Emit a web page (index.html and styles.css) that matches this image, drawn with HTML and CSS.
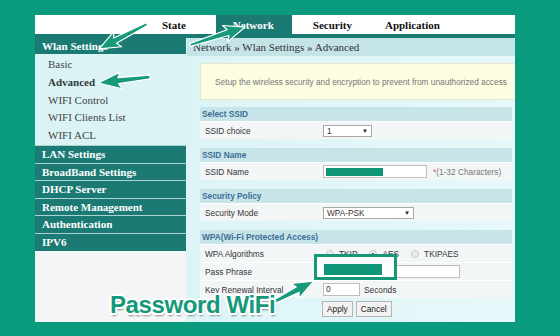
FILE: index.html
```html
<!DOCTYPE html>
<html>
<head>
<meta charset="utf-8">
<link rel="stylesheet" href="styles.css">
</head>
<body>
<div class="panel">
  <div class="topnav">
    <span class="nav-item state">State</span>
    <span class="nav-item tab">Network</span>
    <span class="nav-item sec">Security</span>
    <span class="nav-item app">Application</span>
  </div>
  <div class="layout">
    <aside class="side">
      <div class="side-head first">Wlan Settings</div>
      <ul class="sub">
        <li>Basic</li>
        <li class="cur">Advanced</li>
        <li>WIFI Control</li>
        <li>WIFI Clients List</li>
        <li>WIFI ACL</li>
      </ul>
      <div class="side-head">LAN Settings</div>
      <div class="side-head">BroadBand Settings</div>
      <div class="side-head">DHCP Server</div>
      <div class="side-head">Remote Management</div>
      <div class="side-head">Authentication</div>
      <div class="side-head">IPV6</div>
      <div class="side-fill"></div>
    </aside>
    <main class="main">
      <div class="crumb">Network » Wlan Settings » Advanced</div>
      <div class="content">
        <div class="info">Setup the wireless security and encryption to prevent from unauthorized access</div>

        <section class="sect">
          <div class="sect-head">Select SSID</div>
          <div class="row"><span class="lbl">SSID choice</span><span class="val"><span class="select s1"><span>1</span><span class="caret">▼</span></span></span></div>
        </section>

        <section class="sect">
          <div class="sect-head">SSID Name</div>
          <div class="row"><span class="lbl">SSID Name</span><span class="val"><span class="input ssid"><span class="blot b1"></span></span><span class="hint"><span class="req">*</span>(1-32 Characters)</span></span></div>
        </section>

        <section class="sect">
          <div class="sect-head">Security Policy</div>
          <div class="row"><span class="lbl">Security Mode</span><span class="val"><span class="select s2"><span>WPA-PSK</span><span class="caret">▼</span></span></span></div>
        </section>

        <section class="sect">
          <div class="sect-head">WPA(Wi-Fi Protected Access)</div>
          <div class="row"><span class="lbl">WPA Algorithms</span><span class="val radios"><span class="radio"></span><span class="rt">TKIP</span><span class="radio on"></span><span class="rt">AES</span><span class="radio"></span><span class="rt">TKIPAES</span></span></div>
          <div class="row"><span class="lbl">Pass Phrase</span><span class="val"><span class="input pass"></span></span></div>
          <div class="row"><span class="lbl">Key Renewal Interval</span><span class="val"><span class="input key">0</span><span class="unit">Seconds</span></span></div>
        </section>

        <div class="buttons"><span class="btn">Apply</span><span class="btn">Cancel</span></div>
      </div>
    </main>
  </div>
</div>

<div class="highlight"><span class="blot b2"></span></div>

<svg class="arrows" width="560" height="336" viewBox="0 0 560 336">
  <g fill="#169a79" stroke="#ffffff" stroke-width="1.2" stroke-linejoin="round">
    <polygon transform="translate(147,24) rotate(152.5)" points="0,-1.5 36,-3 33,-8.5 54,0 33,8.5 36,3 0,1.5"/>
    <polygon transform="translate(190,45) rotate(-18)" points="0,-1.5 40,-3 37,-8.5 58,0 37,8.5 40,3 0,1.5"/>
    <polygon transform="translate(150,77) rotate(173.4)" points="0,-1.8 32,-3 29,-8.5 52,0 29,8.5 32,3 0,1.8"/>
    <polygon transform="translate(272,303) rotate(-27.6)" points="0,-1.8 29,-3 26,-8.5 47,0 26,8.5 29,3 0,1.8"/>
  </g>
</svg>

<div class="callout">Password WiFi</div>
</body>
</html>
```

FILE: styles.css
```css
* { box-sizing: border-box; }
html, body { margin: 0; padding: 0; }
body {
  width: 560px;
  height: 336px;
  background: #0a9a7e;
  position: relative;
  overflow: hidden;
  font-family: "Liberation Serif", serif;
}
.panel {
  margin: 15px 0 0 35px;
  width: 480px;
  height: 307px;
  background: #ffffff;
  overflow: hidden;
  display: flex;
  flex-direction: column;
}
.topnav {
  height: 23px;
  flex: none;
  display: flex;
  align-items: stretch;
  padding-left: 127px;
  border-bottom: 4px solid #1b7b74;
  background: #fff;
}
.nav-item {
  font-size: 11px;
  font-weight: bold;
  color: #111;
  line-height: 19px;
  padding-top: 1px;
}
.nav-item.tab {
  margin-left: 30px;
  width: 76px;
  padding-left: 17px;
  background: #1b7b74;
  color: #fff;
}
.nav-item.sec { margin-left: 21px; }
.nav-item.app { margin-left: 33px; }

.layout {
  flex: 1;
  display: flex;
  min-height: 0;
}
.side {
  width: 151px;
  flex: none;
  display: flex;
  flex-direction: column;
}
.side-head {
  height: 17.6px;
  line-height: 16.6px;
  background: #1b7b74;
  color: #fff;
  font-size: 11px;
  font-weight: bold;
  padding-left: 7px;
  border-top: 1px solid #a9d4d0;
  flex: none;
}
.side-head.first {
  height: 16px;
  line-height: 16px;
  border-top: 0;
}
.sub {
  list-style: none;
  margin: 0;
  padding: 2px 0 0 0;
  background: #dcf3f5;
}
.sub li {
  height: 17.8px;
  line-height: 17.8px;
  padding-left: 13px;
  font-size: 11px;
  color: #3c4448;
}
.sub li.cur { font-weight: bold; color: #2f3a3e; }
.side-fill {
  flex: 1;
  background: #f3f5f6;
}

.main {
  flex: 1;
  min-width: 0;
  background: linear-gradient(90deg, #ddf4f7, #e6f8fa);
  overflow: hidden;
}
.crumb {
  height: 18px;
  line-height: 18px;
  background: #c4e4e8;
  font-size: 11px;
  color: #333;
  padding-left: 6px;
  margin-left: 1px;
  white-space: nowrap;
}
.content {
  padding: 7px 3px 0 14px;
  font-family: "Liberation Sans", Arial, sans-serif;
  font-size: 8.3px;
  color: #333;
}
.info {
  height: 37px;
  line-height: 36px;
  margin-right: -30px;
  background: #fdfde2;
  border: 1px solid #e5e8c9;
  padding-left: 14px;
  color: #777;
  white-space: nowrap;
  margin-bottom: 7px;
}
.sect { margin-bottom: 9px; }
.sect-head {
  height: 14px;
  line-height: 14px;
  background: #c7e5e9;
  color: #3b6e97;
  font-weight: bold;
  padding-left: 2px;
}
.row {
  height: 18px;
  border-top: 1px solid #ffffff;
  background: #f3f6f6;
  display: flex;
  align-items: center;
}
.lbl {
  width: 118px;
  padding-left: 5px;
  color: #333;
  flex: none;
}
.val {
  display: flex;
  align-items: center;
  padding-left: 5px;
}
.select {
  height: 12px;
  background: #fff;
  border: 1px solid #a9a9a9;
  display: flex;
  align-items: center;
  justify-content: space-between;
  padding: 0 3px 0 3px;
  line-height: 10px;
}
.select.s1 { width: 49px; }
.select.s2 { width: 91px; }
.caret { font-size: 6px; color: #222; }
.input {
  height: 13px;
  background: #fff;
  border: 1px solid #bdbdbd;
  display: flex;
  align-items: center;
  padding-left: 2px;
  line-height: 11px;
}
.input.ssid { width: 104px; }
.input.pass { width: 137px; }
.input.key { width: 37px; }
.blot {
  display: block;
  background: #0f9678;
}
.blot.b1 { width: 57px; height: 8px; }
.hint { margin-left: 6px; color: #777; }
.req { color: #e04a5a; }
.unit { margin-left: 4px; color: #333; }
.radios .radio {
  width: 8px;
  height: 8px;
  border-radius: 50%;
  border: 1px solid #c8c8c8;
  background: #ececec;
  margin-left: 3px;
  margin-right: 5px;
  position: relative;
}
.radios .radio.on::after {
  content: "";
  position: absolute;
  left: 2px;
  top: 2px;
  width: 2px;
  height: 2px;
  border-radius: 50%;
  background: #333;
}
.rt { margin-right: 9px; color: #333; }
.buttons {
  margin-top: -6px;
  padding-left: 122px;
  display: flex;
  gap: 3px;
}
.btn {
  height: 16px;
  line-height: 14px;
  padding: 0 4px;
  background: #f2f2f2;
  border: 1px solid #b5b5b5;
  color: #222;
}

.highlight {
  position: absolute;
  left: 314px;
  top: 254px;
  width: 83px;
  height: 26px;
  border: 3px solid #149878;
  background: #fff;
  padding: 7px 0 0 7px;
}
.blot.b2 { width: 58px; height: 11px; }

.arrows {
  position: absolute;
  left: 0;
  top: 0;
}
.callout {
  position: absolute;
  left: 110px;
  top: 293px;
  font-family: "Liberation Sans", Arial, sans-serif;
  font-weight: bold;
  font-size: 24px;
  line-height: 24px;
  letter-spacing: -0.4px;
  color: #15987a;
  white-space: nowrap;
  text-shadow:
    -2px 0 0 #fff, 2px 0 0 #fff, 0 -2px 0 #fff, 0 2px 0 #fff,
    -1.5px -1.5px 0 #fff, 1.5px -1.5px 0 #fff, -1.5px 1.5px 0 #fff, 1.5px 1.5px 0 #fff,
    1px 3px 2px rgba(0,0,0,0.45);
}
```
